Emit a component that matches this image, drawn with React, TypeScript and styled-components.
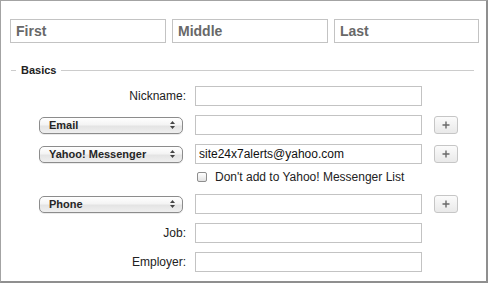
import React from 'react'
import styled, { createGlobalStyle } from 'styled-components'

const GlobalStyle = createGlobalStyle`
  html, body {
    margin: 0;
    padding: 0;
    background: #ffffff;
  }
  body {
    font-family: "Liberation Sans", Arial, sans-serif;
    color: #222222;
  }
`

const Frame = styled.div`
  box-sizing: border-box;
  width: 488px;
  height: 283px;
  border-top: 1px solid #a3a3a3;
  border-left: 1px solid #a3a3a3;
  border-right: 2px solid #8f8f8f;
  border-bottom: 2px solid #8f8f8f;
  background: #ffffff;
  overflow: hidden;
`

const NameRow = styled.div`
  display: grid;
  grid-template-columns: 156px 156px 145px;
  column-gap: 6px;
  padding: 18px 0 0 9px;
`

const NameInput = styled.input`
  box-sizing: border-box;
  height: 24px;
  margin: 0;
  padding: 0 5px;
  border: 1px solid #c3c3c3;
  border-radius: 0;
  outline: none;
  font-family: "Liberation Sans", Arial, sans-serif;
  font-size: 14px;
  font-weight: 700;
  color: #555555;

  &::placeholder {
    color: #686868;
    font-weight: 700;
    opacity: 1;
  }
`

const SectionHeader = styled.div`
  display: flex;
  align-items: center;
  margin: 21px 12px 0 10px;
  height: 13px;
  font-size: 11px;
  font-weight: 700;
  color: #222222;

  &::before {
    content: "";
    width: 5px;
    height: 1px;
    background: #cccccc;
  }

  &::after {
    content: "";
    flex: 1;
    height: 1px;
    background: #cccccc;
  }
`

const SectionTitle = styled.span`
  padding: 0 5px;
  line-height: 13px;
`

const FieldGrid = styled.div`
  display: grid;
  grid-template-columns: 185px 227px 24px;
  column-gap: 9px;
  row-gap: 9px;
  align-items: center;
  margin-top: 9px;
`

const FieldLabel = styled.label`
  justify-self: end;
  font-size: 12px;
  color: #222222;
  line-height: 14px;
`

const TextField = styled.input`
  box-sizing: border-box;
  width: 227px;
  height: 20px;
  margin: 0;
  padding: 0 3px;
  border: 1px solid #c3c3c3;
  border-radius: 0;
  outline: none;
  font-family: "Liberation Sans", Arial, sans-serif;
  font-size: 12px;
  color: #111111;
`

const SelectBox = styled.button`
  justify-self: end;
  box-sizing: border-box;
  display: flex;
  align-items: center;
  justify-content: space-between;
  width: 144px;
  height: 17px;
  margin: 0 3px 0 0;
  padding: 0 7px 0 9px;
  border: 1px solid #8c8c8c;
  border-radius: 5px;
  background: linear-gradient(#ffffff 0%, #f4f4f4 45%, #e4e4e4 55%, #efefef 100%);
  box-shadow: 0 1px 0 rgba(0, 0, 0, 0.08);
  font-family: "Liberation Sans", Arial, sans-serif;
  font-size: 11px;
  font-weight: 700;
  color: #262626;
  cursor: default;
`

const PlusButton = styled.button`
  box-sizing: border-box;
  display: flex;
  align-items: center;
  justify-content: center;
  width: 24px;
  height: 18px;
  margin: 0 0 0 3px;
  padding: 0;
  border: 1px solid #c6c6c6;
  border-radius: 3px;
  background: linear-gradient(#fbfbfb, #e9e9e9);
  cursor: default;
`

const CheckRow = styled.label`
  grid-column: 2 / 4;
  display: flex;
  align-items: center;
  gap: 8px;
  height: 12px;
  margin-top: -2px;
  margin-bottom: 2px;
  padding-left: 2px;
  font-size: 12px;
  color: #222222;
`

const CheckBox = styled.span`
  box-sizing: border-box;
  width: 10px;
  height: 10px;
  border: 1px solid #8e8e8e;
  border-radius: 2px;
  background: linear-gradient(#ffffff, #e2e2e2);
`

const Spacer = styled.span``

const UpDownArrows = () => (
  <svg width="5" height="8" viewBox="0 0 5 8">
    <path d="M2.5 0 L5 3 L0 3 Z" fill="#444" />
    <path d="M2.5 8 L5 5 L0 5 Z" fill="#444" />
  </svg>
)

const PlusIcon = () => (
  <svg width="8" height="8" viewBox="0 0 8 8">
    <path d="M4 0.5 V7.5 M0.5 4 H7.5" stroke="#6a6a6a" strokeWidth="1.4" />
  </svg>
)

const Select: React.FC<{ value: string }> = ({ value }) => (
  <SelectBox type="button">
    <span>{value}</span>
    <UpDownArrows />
  </SelectBox>
)

const Plus = () => (
  <PlusButton type="button">
    <PlusIcon />
  </PlusButton>
)

const App: React.FC = () => {
  return (
    <>
      <GlobalStyle />
      <Frame>
        <NameRow>
          <NameInput placeholder="First" />
          <NameInput placeholder="Middle" />
          <NameInput placeholder="Last" />
        </NameRow>
        <SectionHeader>
          <SectionTitle>Basics</SectionTitle>
        </SectionHeader>
        <FieldGrid>
          <FieldLabel>Nickname:</FieldLabel>
          <TextField />
          <Spacer />

          <Select value="Email" />
          <TextField />
          <Plus />

          <Select value="Yahoo! Messenger" />
          <TextField defaultValue="site24x7alerts@yahoo.com" />
          <Plus />

          <Spacer />
          <CheckRow>
            <CheckBox />
            Don't add to Yahoo! Messenger List
          </CheckRow>

          <Select value="Phone" />
          <TextField />
          <Plus />

          <FieldLabel>Job:</FieldLabel>
          <TextField />
          <Spacer />

          <FieldLabel>Employer:</FieldLabel>
          <TextField />
          <Spacer />
        </FieldGrid>
      </Frame>
    </>
  )
}

export default App
